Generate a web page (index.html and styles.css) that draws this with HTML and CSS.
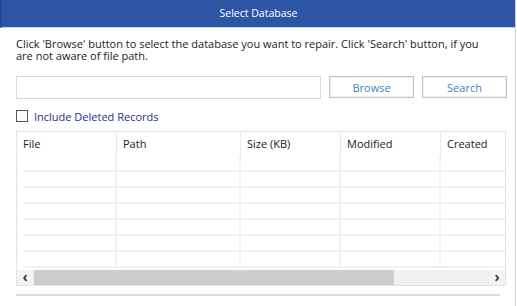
FILE: index.html
```html
<!DOCTYPE HTML>
<html lang="en">
  <head>
    <title>Select Database</title>
    <meta charset="utf-8">
    <link rel="stylesheet" href="styles.css">
  </head>
  <body>

  <div class="dialog">
    <div class="titlebar">Select Database</div>

    <div class="content">
      <p class="hint">Click 'Browse' button to select the database you want to repair. Click 'Search' button, if you are not aware of file path.</p>

      <div class="pathrow">
        <input class="pathbox" type="text">
        <button class="btn">Browse</button>
        <button class="btn">Search</button>
      </div>

      <label class="check">
        <span class="box"></span>
        Include Deleted Records
      </label>

      <div class="grid">
        <div class="head">
          <div class="col c1">File</div>
          <div class="col c2">Path</div>
          <div class="col c3">Size (KB)</div>
          <div class="col c4">Modified</div>
          <div class="col c5">Created</div>
        </div>
        <div class="rows">
          <div class="row"><div class="col c1"></div><div class="col c2"></div><div class="col c3"></div><div class="col c4"></div><div class="col c5"></div></div>
          <div class="row"><div class="col c1"></div><div class="col c2"></div><div class="col c3"></div><div class="col c4"></div><div class="col c5"></div></div>
          <div class="row"><div class="col c1"></div><div class="col c2"></div><div class="col c3"></div><div class="col c4"></div><div class="col c5"></div></div>
          <div class="row"><div class="col c1"></div><div class="col c2"></div><div class="col c3"></div><div class="col c4"></div><div class="col c5"></div></div>
          <div class="row"><div class="col c1"></div><div class="col c2"></div><div class="col c3"></div><div class="col c4"></div><div class="col c5"></div></div>
          <div class="row"><div class="col c1"></div><div class="col c2"></div><div class="col c3"></div><div class="col c4"></div><div class="col c5"></div></div>
          <div class="row"><div class="col c1"></div><div class="col c2"></div><div class="col c3"></div><div class="col c4"></div><div class="col c5"></div></div>
        </div>
        <div class="hscroll">
          <span class="arrow">&#8249;</span>
          <span class="track"><span class="thumb"></span></span>
          <span class="arrow">&#8250;</span>
        </div>
      </div>

      <div class="rule"></div>
    </div>
  </div>

  </body>
</html>
```

FILE: styles.css
```css
html {
  height: 100%;
}
body {
  margin: 0;
  padding: 0;
  background: #ffffff;
  color: #1a1a1a;
  font-family: "Open Sans", sans-serif;
  font-size: 11px;
  height: 100%;
}

.dialog {
  width: 515px;
  height: 306px;
  border-right: 1px solid #d6d6d6;
  overflow: hidden;
}

.titlebar {
  height: 27px;
  line-height: 27px;
  background-color: #2c56a5;
  border-left: 2px solid #23479a;
  border-bottom: 1px solid #c8d4ea;
  color: #ffffff;
  text-align: center;
  font-size: 10.5px;
}

.content {
  padding: 10px 9px 0 16px;
}

.hint {
  margin: 0;
  max-width: 476px;
  line-height: 12px;
  font-size: 11px;
  color: #222;
}

.pathrow {
  display: flex;
  gap: 8px;
  margin-top: 14px;
  height: 23px;
}

.pathbox {
  flex: 0 0 305px;
  box-sizing: border-box;
  height: 23px;
  margin: 0;
  border: 1px solid #d9d9d9;
  background: #fff;
  outline: none;
}

.btn {
  flex: 0 0 85px;
  height: 22px;
  margin: 0;
  border: 1px solid #c4c4c4;
  background: #fff;
  color: #3b86c6;
  font: 11px "Open Sans", sans-serif;
  box-shadow: inset 0 0 0 1px #f0f0f0;
}

.check {
  display: flex;
  align-items: center;
  gap: 6px;
  margin-top: 10px;
  height: 14px;
  color: #1f2e8c;
}

.check .box {
  width: 10px;
  height: 10px;
  border: 1px solid #555;
  background: #fff;
}

.grid {
  margin-top: 8px;
  width: 490px;
  border: 1px solid #e2e2e2;
  box-sizing: border-box;
}

.head {
  display: flex;
  height: 24px;
  line-height: 24px;
}

.head .col {
  padding-left: 6px;
  border-right: 1px solid #e8e8e8;
  box-sizing: border-box;
}

.col.c1 { width: 100px; }
.col.c2 { width: 124px; }
.col.c3 { width: 100px; }
.col.c4 { width: 100px; }
.col.c5 { width: 64px; border-right: none; }

.rows {
  padding: 0 0 0 6px;
  height: 112px;
}

.row {
  display: flex;
  height: 16px;
  box-sizing: border-box;
  border-bottom: 2px solid #f1f1f1;
}

.row .col {
  box-sizing: border-box;
  border-right: 2px solid #f3f3f3;
}

.row .col.c1 { width: 94px; }
.row .col.c5 { border-right: none; }

.hscroll {
  display: flex;
  height: 15px;
  margin-top: 2px;
  background: #f0f0f0;
}

.arrow {
  width: 16px;
  line-height: 14px;
  text-align: center;
  font-size: 14px;
  font-weight: bold;
  color: #333;
  background: #f3f3f3;
}

.track {
  flex: 1;
  padding: 0 1px;
}

.thumb {
  display: block;
  width: 360px;
  height: 15px;
  background: #cdcdcd;
}

.rule {
  margin-top: 8px;
  width: 484px;
  border-top: 2px solid #dcdcdc;
}
```
